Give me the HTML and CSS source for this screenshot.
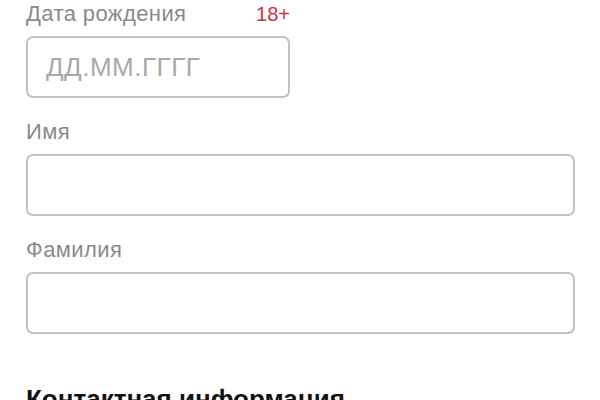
FILE: index.html
```html
<!DOCTYPE html>
<html lang="ru">
<head>
<meta charset="utf-8">
<link rel="stylesheet" href="styles.css">
</head>
<body>
<form class="form">
  <div class="field field-date">
    <div class="label-row">
      <span class="label">Дата рождения</span>
      <span class="age">18+</span>
    </div>
    <div class="input"><span class="placeholder">ДД.ММ.ГГГГ</span></div>
  </div>
  <div class="field">
    <div class="label-row"><span class="label">Имя</span></div>
    <div class="input"></div>
  </div>
  <div class="field">
    <div class="label-row"><span class="label">Фамилия</span></div>
    <div class="input"></div>
  </div>
  <h2 class="section-title">Контактная информация</h2>
</form>
</body>
</html>
```
FILE: styles.css
```css
html, body {
  margin: 0;
  padding: 0;
  background: #ffffff;
}
body {
  font-family: "Liberation Sans", Arial, sans-serif;
  overflow: hidden;
}
.form {
  display: flex;
  flex-direction: column;
  padding: 0 25px 0 26px;
}
.field {
  display: flex;
  flex-direction: column;
  margin-bottom: 20px;
}
.field-date {
  width: 264px;
}
.label-row {
  display: flex;
  justify-content: space-between;
  align-items: baseline;
  height: 24px;
  padding-top: 2px;
  margin-bottom: 10px;
}
.label {
  font-size: 22px;
  line-height: 24px;
  letter-spacing: 0.4px;
  color: #8a8a8a;
}
.age {
  font-size: 20px;
  line-height: 24px;
  color: #c4344c;
}
.input {
  box-sizing: border-box;
  height: 62px;
  border: 2px solid #c2c2c2;
  border-radius: 7px;
  display: flex;
  align-items: center;
  padding-left: 18px;
}
.placeholder {
  font-size: 26px;
  letter-spacing: 0.5px;
  color: #a9a9a9;
}
.section-title {
  margin: 30px 0 0;
  font-size: 26px;
  line-height: 30px;
  font-weight: bold;
  color: #111;
  white-space: nowrap;
}
```
